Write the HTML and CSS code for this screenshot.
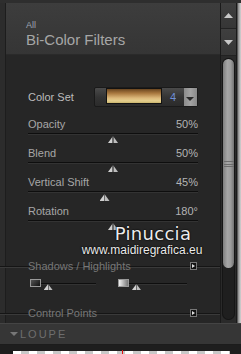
FILE: index.html
```html
<!DOCTYPE html>
<html>
<head>
<meta charset="utf-8">
<link rel="stylesheet" href="styles.css">
</head>
<body>
<div class="top">
  <div class="edge"></div>
  <div class="panel">
    <div class="header">
      <div class="crumb">All</div>
      <div class="title">Bi-Color Filters</div>
    </div>
    <div class="body">
      <div class="colorset">
        <span class="label bright">Color Set</span>
        <div class="picker">
          <div class="swatch"></div>
          <span class="num">4</span>
          <div class="drop"><svg width="8" height="5" viewBox="0 0 8 5"><path d="M0 0h8L4 4z" fill="#2a2a2a"/></svg></div>
        </div>
      </div>
      <div class="slider">
        <div class="row"><span class="label">Opacity</span><span class="val">50%</span></div>
        <div class="track"></div>
        <div class="handles"><span class="handle" style="left:50%"></span></div>
      </div>
      <div class="slider">
        <div class="row"><span class="label">Blend</span><span class="val">50%</span></div>
        <div class="track"></div>
        <div class="handles"><span class="handle" style="left:50%"></span></div>
      </div>
      <div class="slider">
        <div class="row"><span class="label">Vertical Shift</span><span class="val">45%</span></div>
        <div class="track"></div>
        <div class="handles"><span class="handle" style="left:45%"></span></div>
      </div>
      <div class="slider">
        <div class="row"><span class="label">Rotation</span><span class="val">180°</span></div>
        <div class="track"></div>
        <div class="handles"><span class="handle" style="left:50%"></span></div>
      </div>
      <div class="section sh">
        <span class="stitle">Shadows / Highlights</span>
        <span class="sbtn"></span>
      </div>
      <div class="minis">
        <div class="mini">
          <span class="sq dark"></span>
          <div class="mtrack"><span class="handle small" style="left:12%"></span></div>
        </div>
        <div class="mini">
          <span class="sq light"></span>
          <div class="mtrack"><span class="handle small" style="left:12%"></span></div>
        </div>
      </div>
      <div class="section cp">
        <span class="stitle">Control Points</span>
        <span class="sbtn"></span>
      </div>
      <div class="watermark">
        <div class="wm1">Pinuccia</div>
        <div class="wm2">www.maidiregrafica.eu</div>
      </div>
    </div>
  </div>
  <div class="scroll">
    <div class="sb up"><svg width="9" height="5" viewBox="0 0 9 5"><path d="M0 5L4.5 0 9 5z" fill="#c8c8c8"/></svg></div>
    <div class="sb down"><svg width="9" height="5" viewBox="0 0 9 5"><path d="M0 0h9L4.5 5z" fill="#c8c8c8"/></svg></div>
    <div class="groove">
      <div class="thumb"><span class="grip"></span></div>
    </div>
  </div>
  <div class="rim"></div>
</div>
<div class="loupe">
  <span class="caret"></span><span class="ltitle">LOUPE</span>
</div>
<div class="preview">
  <div class="checks"></div>
  <span class="redline"></span>
</div>
</body>
</html>
```

FILE: styles.css
```css
* { box-sizing: border-box; }
html, body { margin: 0; padding: 0; }
body {
  width: 241px;
  height: 354px;
  overflow: hidden;
  background: #2b2b2b;
  font-family: "Liberation Sans", Arial, sans-serif;
}
.top {
  display: flex;
  height: 323px;
  border-top: 3px solid #2e2e2e;
}
.edge {
  width: 6px;
  background: #2c2c2c;
  border-right: 1px solid #1d1d1d;
}
.panel {
  width: 214px;
  display: flex;
  flex-direction: column;
  background: #272727;
}
.header {
  height: 52px;
  background: linear-gradient(#3d3d3d, #353535);
  padding: 17px 0 0 20px;
  border-bottom: 1px solid #2a2a2a;
}
.crumb {
  font-size: 9px;
  line-height: 10px;
  color: #9ea7b2;
}
.title {
  margin-top: 1px;
  font-size: 15px;
  line-height: 17px;
  color: #a6a6a6;
}
.body {
  position: relative;
  flex: 1;
  padding-top: 32px;
  background: #262626;
}
.label { font-size: 11px; line-height: 13px; color: #a6a6a6; }
.label.bright { color: #bcbcbc; }
.val { font-size: 11px; line-height: 13px; color: #b4b4b4; }
.colorset {
  display: flex;
  align-items: center;
  padding-left: 22px;
  gap: 20px;
  height: 20px;
}
.picker {
  width: 104px;
  height: 20px;
  display: flex;
  align-items: center;
  background: linear-gradient(#4b4b4b, #343434 50%, #2b2b2b);
  border: 1px solid #1a1a1a;
  border-radius: 2px;
  padding-left: 11px;
}
.swatch {
  width: 57px;
  height: 16px;
  margin-top: -2px;
  border: 1px solid #121212;
  background: linear-gradient(#6a4620, #a8773e 30%, #ddb97c 65%, #e4cf8e 85%, #c9b46c);
}
.num {
  width: 22px;
  text-align: center;
  font-size: 11px;
  color: #6f8fd6;
}
.drop {
  margin-left: auto;
  width: 13px;
  height: 18px;
  background: linear-gradient(90deg, #8c8c8c, #a3a3a3 50%, #8a8a8a);
  display: flex;
  align-items: flex-end;
  justify-content: center;
  padding-bottom: 4px;
}
.drop svg { display: block; }
.slider {
  margin: 11px 22px 0 22px;
}
.slider + .slider { margin-top: 0; }
.row {
  display: flex;
  justify-content: space-between;
  height: 13px;
}
.track {
  margin-top: 2px;
  height: 1px;
  background: #0e0e0e;
  box-shadow: 0 1px 0 #333;
}
.handles {
  position: relative;
  height: 13px;
}
.handle {
  position: absolute;
  top: 2px;
  width: 10px;
  height: 7px;
  margin-left: -5px;
  background: linear-gradient(90deg, #d0d0d0 0 45%, #6a6a6a 45% 55%, #bdbdbd 55%);
  clip-path: polygon(50% 0, 100% 100%, 0 100%);
}
.handle.small {
  top: 1px;
  width: 9px;
  height: 6px;
  margin-left: -4px;
}
.section {
  position: relative;
  display: flex;
  align-items: center;
  height: 12px;
  margin-left: -6px;
  padding-left: 28px;
  padding-right: 23px;
}
.section::before {
  content: "";
  position: absolute;
  left: 0;
  right: 0;
  top: 6px;
  height: 1px;
  background: #151515;
  box-shadow: 0 1px 0 #3a3a3a;
}
.sh { margin-top: 26px; }
.cp { margin-top: 14px; }
.stitle {
  position: relative;
  font-size: 11px;
  line-height: 12px;
  color: #777;
}
.sbtn {
  position: relative;
  margin-left: auto;
  width: 7px;
  height: 8px;
  background: #111;
  border: 1px solid #777;
}
.sbtn::after {
  content: "";
  position: absolute;
  left: 1px;
  top: 1px;
  border-left: 3px solid #ddd;
  border-top: 2px solid transparent;
  border-bottom: 2px solid transparent;
}
.minis {
  display: flex;
  gap: 22px;
  padding-left: 24px;
  margin-top: 7px;
  height: 14px;
}
.mini {
  display: flex;
  align-items: flex-start;
}
.sq {
  width: 11px;
  height: 8px;
  border: 1px solid #999;
}
.sq.dark { background: linear-gradient(135deg, #555, #111); }
.sq.light { background: linear-gradient(90deg, #f0f0f0, #777); }
.mtrack {
  position: relative;
  width: 55px;
  height: 1px;
  margin-top: 4px;
  background: #0e0e0e;
  box-shadow: 0 1px 0 #333;
}
.mini + .mini .mtrack { width: 58px; }
.watermark {
  position: absolute;
  left: 74px;
  top: 169px;
  width: 124px;
  text-align: center;
  color: #ececec;
  text-shadow: 0 0 2px #000, 0 0 1px #000;
}
.wm1 {
  font-family: "DejaVu Sans", sans-serif;
  font-size: 18px;
  line-height: 19px;
  padding-left: 22px;
  letter-spacing: 0.3px;
}
.wm2 {
  font-family: "Liberation Sans", sans-serif;
  font-size: 12px;
  line-height: 14px;
}
.scroll {
  width: 17px;
  display: flex;
  flex-direction: column;
  background: #2a2a2a;
  border-left: 1px solid #1a1a1a;
  border-right: 1px solid #1a1a1a;
}
.sb {
  height: 27px;
  display: flex;
  align-items: center;
  justify-content: center;
  background: linear-gradient(#3f3f3f, #363636);
  border-bottom: 1px solid #222;
}
.sb svg { display: block; }
.up { height: 26px; }
.groove {
  margin: 2px 1px 0 1px;
  height: 262px;
  border-radius: 7px;
  background: #1f1f1f;
  box-shadow: inset 0 0 0 1px #151515;
}
.thumb {
  height: 209px;
  margin: 1px;
  border-radius: 6px;
  background: linear-gradient(90deg, #7d7d7d, #a5a5a5 40%, #9c9c9c 70%, #727272);
  display: flex;
  justify-content: center;
  padding-top: 102px;
}
.grip {
  width: 10px;
  height: 6px;
  border-top: 1px solid #6c6c6c;
  border-bottom: 1px solid #6c6c6c;
  background: linear-gradient(transparent 2px, #6c6c6c 2px 3px, transparent 3px);
}
.rim {
  width: 4px;
  background: linear-gradient(90deg, #3a3a3a, #9a9a9a 40%, #d4d4d4);
}
.loupe {
  height: 22px;
  display: flex;
  align-items: center;
  padding-left: 10px;
  background: #363636;
  border-top: 1px solid #444;
  border-bottom: 1px solid #1c1c1c;
}
.caret {
  width: 0;
  height: 0;
  border-top: 4px solid #777;
  border-left: 4px solid transparent;
  border-right: 4px solid transparent;
  margin-right: 2px;
}
.ltitle {
  font-size: 11px;
  letter-spacing: 2px;
  color: #6e6e6e;
}
.preview {
  position: relative;
  height: 10px;
  background: #1e1e1e;
  padding: 6px 11px 0 13px;
}
.checks {
  height: 4px;
  background: repeating-linear-gradient(90deg, #ffffff 0 8px, #c8c8c8 8px 16px);
}
.redline {
  position: absolute;
  left: 122px;
  top: 5px;
  width: 1px;
  height: 5px;
  background: #e01010;
}
```
